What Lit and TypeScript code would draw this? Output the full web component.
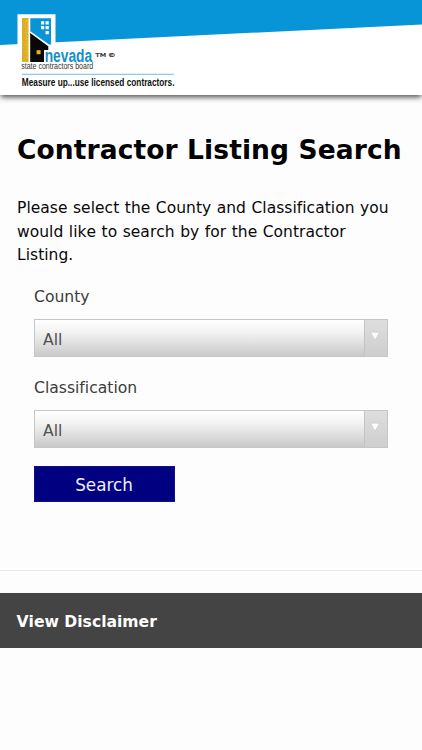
import { LitElement, html, css } from "lit";
import { customElement, property } from "lit/decorators.js";

@customElement("site-header")
class SiteHeader extends LitElement {
  static styles = css`
    :host { display: block; height: 95px; background: #fff; box-shadow: 0 3px 5px -1px rgba(0, 0, 0, 0.6), 0 2px 7px rgba(0, 0, 0, 0.2); }
    svg { display: block; }
    text { font-family: "Liberation Sans", Arial, sans-serif; }
    .wide { font-family: "DejaVu Sans", sans-serif; }
  `;
  render() {
    return html`<svg width="422" height="95" viewBox="0 0 422 95" role="img" aria-label="Nevada State Contractors Board">
      <rect width="422" height="95" fill="#fff" />
      <path d="M0 0H422V24.5L0 45Z" fill="#0795d7" />
      <path d="M17.5 14.3H55.5V50H17.5Z" fill="#fff" />
      <rect x="22" y="18" width="6.5" height="44" fill="#dcae22" />
      <path d="M25.5 21H28.5M26.5 24H28.5M25.5 27H28.5M26.5 30H28.5M25.5 33H28.5M26.5 36H28.5M25.5 39H28.5M26.5 42H28.5M25.5 45H28.5M26.5 48H28.5M25.5 51H28.5M26.5 54H28.5M25.5 57H28.5" stroke="#f0d36a" stroke-width="0.7" />
      <path d="M30.3 18.3H51V44.5H49L30.3 31.3Z" fill="#0795d7" />
      <path d="M41 21.2h3.2v3.2H41zM45.6 21.2h3.2v3.2h-3.2zM41 26h3.2v3.2H41zM45.6 26h3.2v3.2h-3.2zM45.6 31h3.2v3.2h-3.2z" fill="#fff" />
      <path d="M30.2 33L48.3 46.2V50H44V62H30.2Z" fill="#080808" />
      <rect x="36.6" y="50.2" width="4" height="4" fill="#e3b21d" />
      <text x="44.7" y="61.8" font-size="17.5" font-weight="700" fill="#168fc9" textLength="47.5" lengthAdjust="spacingAndGlyphs">nevada</text>
      <text class="wide" x="95.3" y="57.2" font-size="5.5" fill="#222" stroke="#222" stroke-width="0.2" textLength="11" lengthAdjust="spacingAndGlyphs">TM</text>
      <text class="wide" x="108" y="57.2" font-size="5.5" fill="#222" stroke="#222" stroke-width="0.2" textLength="7.5" lengthAdjust="spacingAndGlyphs">©</text>
      <text x="21.2" y="69.4" font-size="8.8" fill="#333" textLength="72" lengthAdjust="spacingAndGlyphs">state contractors board</text>
      <rect x="22" y="73.8" width="152" height="0.9" fill="#62b5de" />
      <text x="21.8" y="85.5" font-size="10.2" font-weight="700" fill="#111" textLength="152.7" lengthAdjust="spacingAndGlyphs">Measure up...use licensed contractors.</text>
    </svg>`;
  }
}

@customElement("select-field")
class SelectField extends LitElement {
  @property() label = "";
  @property() value = "All";
  static styles = css`
    :host { display: block; height: 91px; color: #3b3b3b; }
    .label { height: 34px; line-height: 24px; font-size: 15.6px; }
    .box { display: flex; box-sizing: border-box; width: 354px; height: 38px; border: 1px solid #c6c6c6; background: linear-gradient(#fff, #f2f2f2 35%, #c9c9c9); }
    .value { flex: 1; padding-left: 8px; line-height: 40px; height: 36px; font-size: 15.6px; color: #505050; }
    .arrow { box-sizing: border-box; width: 23px; border-left: 1px solid #c3c3c3; background: linear-gradient(#dedede, #cecece); }
    svg { display: block; margin: 10px 0 0 4px; }
  `;
  render() {
    return html`<div class="label">${this.label}</div>
      <div class="box" role="combobox" aria-label=${this.label}>
        <div class="value">${this.value}</div>
        <div class="arrow"><svg width="13" height="13"><path d="M1.5 2.2H10.5L6 10.2Z" fill="#fff" stroke="#c4c4c4" stroke-width="0.6" /></svg></div>
      </div>`;
  }
}

@customElement("app-root")
class AppRoot extends LitElement {
  static styles = css`
    :host { display: block; height: 750px; overflow: hidden; background: #fdfdfd; font-family: "DejaVu Sans", Verdana, sans-serif; font-variant-ligatures: none; font-kerning: none; color: #080808; }
    h1 { margin: 37px 0 0 17px; font-size: 26.5px; letter-spacing: 0.1px; line-height: 36px; font-weight: 700; white-space: nowrap; color: #000; }
    p { width: 380px; margin: 29px 0 0 17px; font-size: 15.5px; word-spacing: 0.5px; letter-spacing: 0.04px; line-height: 23.5px; }
    .form { margin: 17.5px 34px 0; }
    button { display: block; width: 141px; height: 36px; margin-top: -1px; padding: 0 1px 0 0; border: 1px solid #10108c; background: #000080; color: #eef; font: 16.8px/36px "DejaVu Sans", Verdana, sans-serif; }
    .rule { height: 1px; margin-top: 68px; background: #e9e9e9; }
    footer { box-sizing: border-box; height: 55px; margin-top: 22px; padding-left: 16.5px; background: #444; color: #fff; font-size: 15.6px; line-height: 58px; font-weight: 700; }
  `;
  render() {
    return html`<site-header></site-header>
      <main>
        <h1>Contractor Listing Search</h1>
        <p>Please select the County and Classification you would like to search by for the Contractor Listing.</p>
        <div class="form">
          <select-field label="County"></select-field>
          <select-field label="Classification"></select-field>
          <button>Search</button>
        </div>
      </main>
      <div class="rule"></div>
      <footer>View Disclaimer</footer>`;
  }
}
